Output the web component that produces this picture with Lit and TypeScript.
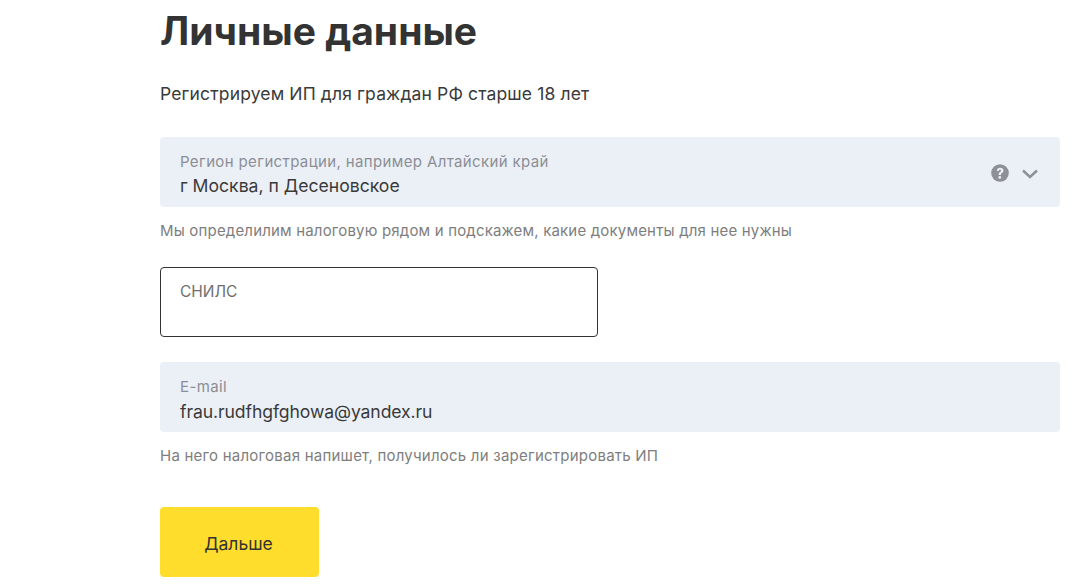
import { LitElement, html, css } from "lit";
import { customElement } from "lit/decorators.js";

@customElement("app-root")
export class AppRoot extends LitElement {
  static styles = css`
    :host {
      display: block;
      background: #fff;
      height: 587px;
      overflow: hidden;
      font-family: Inter, "Liberation Sans", sans-serif;
      color: #333;
    }
    .page {
      display: flex;
      flex-direction: column;
      align-items: flex-start;
      padding: 8px 17px 0 160px;
    }
    h1 {
      margin: 0;
      font-size: 39px;
      line-height: 46px;
      font-weight: 700;
      color: #333;
    }
    .lead {
      margin: 28px 0 0;
      font-size: 17.5px;
      line-height: 24px;
      letter-spacing: 0.14px;
      color: #3a3a3a;
    }
    .field {
      box-sizing: border-box;
      width: 900px;
      height: 70px;
      background: #ebf0f7;
      border-radius: 4px;
      padding: 16px 20px 0;
      display: flex;
      justify-content: space-between;
    }
    .first { margin-top: 31px; }
    .email { margin-top: 25px; }
    .label {
      font-size: 15px;
      line-height: 18px;
      letter-spacing: 0.37px;
      color: #8b8e94;
    }
    .value {
      margin-top: 2px;
      font-size: 17.6px;
      line-height: 25px;
      color: #3a3a3a;
    }
    .email .value {
      margin-top: 3px;
      letter-spacing: -0.1px;
    }
    .icons {
      display: flex;
      align-items: center;
      gap: 13px;
      height: 39px;
      padding-right: 2px;
    }
    .icons svg:last-child { margin-top: 3px; }
    .hint {
      margin: 14px 0 0;
      font-size: 15px;
      line-height: 20px;
      letter-spacing: 0.18px;
      color: #7e7e7e;
    }
    .hint.wide { letter-spacing: 0.23px; }
    .snils {
      box-sizing: border-box;
      margin-top: 26px;
      width: 438px;
      height: 70px;
      border: 1px solid #333;
      border-radius: 4px;
      padding: 15px 19px 0;
      font-size: 15.5px;
      line-height: 18px;
      color: #6f6f6f;
      background: #fff;
    }
    button {
      margin-top: 41px;
      width: 159px;
      height: 70px;
      border: 0;
      border-radius: 4px;
      background: #ffdd2d;
      font: inherit;
      font-size: 17.5px;
      color: #333;
      padding: 3px 2px 0 0;
    }
  `;

  render() {
    return html`
      <div class="page">
        <h1>Личные данные</h1>
        <p class="lead">Регистрируем ИП для граждан РФ старше 18 лет</p>
        <div class="field first">
          <div>
            <div class="label">Регион регистрации, например Алтайский край</div>
            <div class="value">г Москва, п Десеновское</div>
          </div>
          <div class="icons">
            <svg width="18" height="18" viewBox="0 0 18 18">
              <circle cx="9" cy="9" r="8.800" fill="#8d9096"></circle>
              <path d="M5.800 7C5.900 5 7.400 3.800 9.200 3.800c2 0 3.300 1.200 3.300 2.800 0 1.200-.7 1.900-1.500 2.400-.8.500-1 .8-1 1.500v.4H7.700v-.6c0-1.100.4-1.700 1.300-2.300.7-.5 1-.8 1-1.300 0-.6-.4-1-1-1-.7 0-1.200.5-1.300 1.300H5.800z" fill="#ebf0f7"></path>
              <circle cx="8.800" cy="13.400" r="1.400" fill="#ebf0f7"></circle>
            </svg>
            <svg width="16" height="10" viewBox="0 0 16 10">
              <path d="M1 1.500 8 8l7-6.500" fill="none" stroke="#8d9096" stroke-width="2.400"></path>
            </svg>
          </div>
        </div>
        <p class="hint">Мы определилим налоговую рядом и подскажем, какие документы для нее нужны</p>
        <div class="snils">СНИЛС</div>
        <div class="field email">
          <div>
            <div class="label">E-mail</div>
            <div class="value">frau.rudfhgfghowa@yandex.ru</div>
          </div>
        </div>
        <p class="hint wide">На него налоговая напишет, получилось ли зарегистрировать ИП</p>
        <button>Дальше</button>
      </div>
    `;
  }
}
